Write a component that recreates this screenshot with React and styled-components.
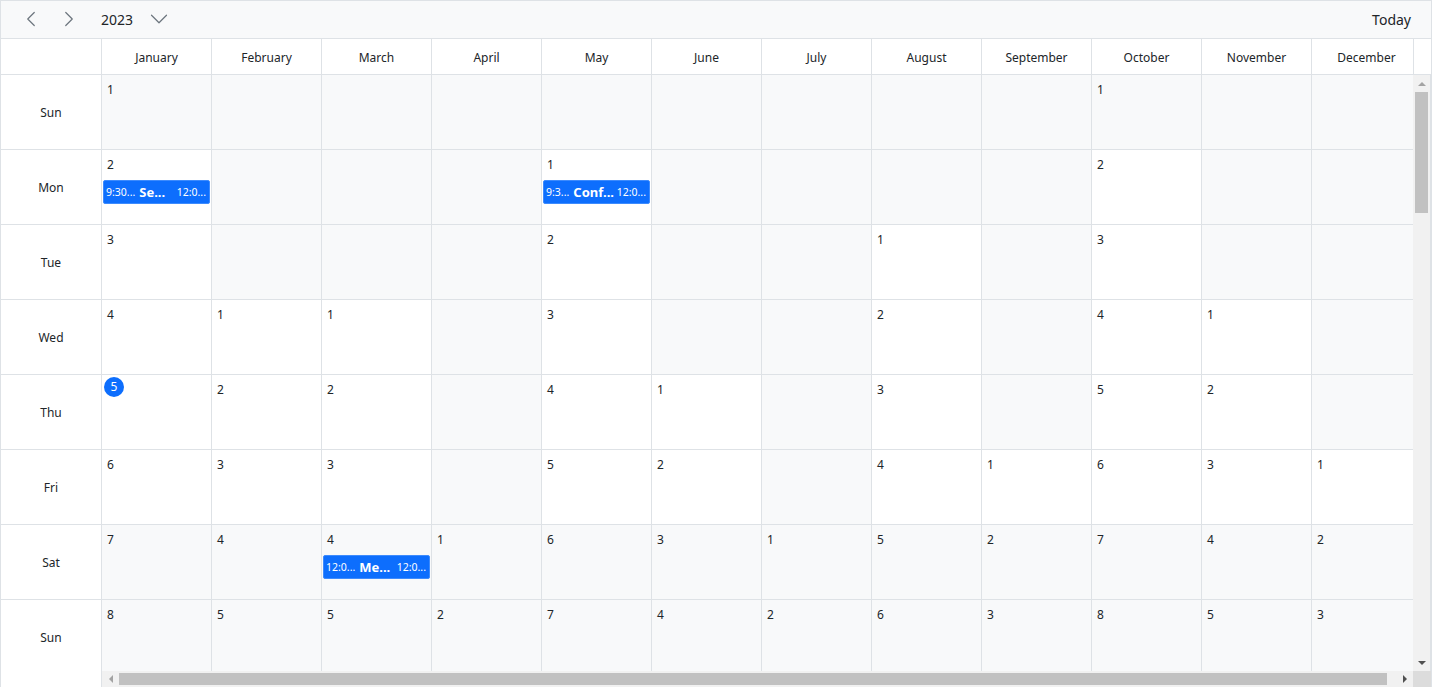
import React from 'react';
import styled, { createGlobalStyle } from 'styled-components';
import { ChevronLeft, ChevronRight, ChevronDown } from 'lucide-react';

const GlobalStyle = createGlobalStyle`
  html, body {
    margin: 0;
    padding: 0;
    background: #fff;
    font-family: "Noto Sans", "Liberation Sans", sans-serif;
    color: #212529;
  }
  * { box-sizing: border-box; }
`;

const months = [
  'January', 'February', 'March', 'April', 'May', 'June',
  'July', 'August', 'September', 'October', 'November', 'December'
];
// weekday of the 1st of each month in 2023 (0 = Sunday)
const firstDays = [0, 3, 3, 6, 1, 4, 6, 2, 5, 0, 3, 5];
const dayNames = ['Sun', 'Mon', 'Tue', 'Wed', 'Thu', 'Fri', 'Sat'];
const ROWS = 8;

const events = {
  '0-1': { start: '9:30...', title: 'Se...', end: '12:0...' },
  '4-1': { start: '9:3...', title: 'Conf...', end: '12:0...' },
  '2-6': { start: '12:0...', title: 'Me...', end: '12:0...' },
};

const App = () => {
  const rows = Array.from({ length: ROWS }, (_, r) => r);

  return (
    <>
      <GlobalStyle />
      <Scheduler>
        <Toolbar>
          <NavButton><ChevronLeft size={26} strokeWidth={1.2} absoluteStrokeWidth /></NavButton>
          <NavButton><ChevronRight size={26} strokeWidth={1.2} absoluteStrokeWidth /></NavButton>
          <YearPicker>
            2023
            <ChevronDown size={30} strokeWidth={1.2} absoluteStrokeWidth />
          </YearPicker>
          <TodayButton>Today</TodayButton>
        </Toolbar>

        <HeaderRow>
          <CornerCell />
          <HeaderViewport>
            {months.map(m => <MonthCell key={m}>{m}</MonthCell>)}
          </HeaderViewport>
          <HeaderSpacer />
        </HeaderRow>

        <Body>
          <DayColumn>
            {rows.map(r => <DayLabel key={r}>{dayNames[r % 7]}</DayLabel>)}
          </DayColumn>

          <Main>
            <ViewportRow>
              <Viewport>
                <Grid>
                  {rows.map(r => months.map((m, mi) => {
                    const date = r - firstDays[mi] + 1;
                    const weekday = r % 7;
                    const empty = date < 1;
                    const muted = empty || weekday === 0 || weekday === 6;
                    const ev = events[`${mi}-${r}`];
                    const today = mi === 0 && date === 5;
                    return (
                      <Cell key={`${r}-${m}`} $muted={muted}>
                        {!empty && <DateLabel $today={today}>{date}</DateLabel>}
                        {ev && (
                          <Event>
                            <EventTime>{ev.start}</EventTime>
                            <EventTitle>{ev.title}</EventTitle>
                            <EventTime $end>{ev.end}</EventTime>
                          </Event>
                        )}
                      </Cell>
                    );
                  }))}
                </Grid>
              </Viewport>
              <VScroll>
                <ScrollArrow><Triangle $dir="up" /></ScrollArrow>
                <VTrack><VThumb /></VTrack>
                <ScrollArrow><Triangle $dir="down" $dark /></ScrollArrow>
              </VScroll>
            </ViewportRow>
            <HScroll>
              <HArrow><Triangle $dir="left" /></HArrow>
              <HThumb />
              <HArrow><Triangle $dir="right" $dark /></HArrow>
              <ScrollCorner />
            </HScroll>
          </Main>
        </Body>
      </Scheduler>
    </>
  );
};

export default App;

const Scheduler = styled.div`
  width: 1432px;
  height: 687px;
  border: 1px solid #dee2e6;
  border-bottom: none;
  display: flex;
  flex-direction: column;
  overflow: hidden;
`

const Toolbar = styled.div`
  height: 38px;
  flex: none;
  display: flex;
  align-items: center;
  padding: 0 20px 1px 11px;
  background: #f8f9fa;
  border-bottom: 1px solid #dee2e6;
`

const NavButton = styled.div`
  width: 38px;
  height: 36px;
  display: flex;
  align-items: center;
  justify-content: center;
  color: #6c757d;
`

const YearPicker = styled.div`
  display: flex;
  align-items: center;
  gap: 11px;
  margin-left: 13px;
  font-size: 14px;
  color: #212529;
  svg { color: #6c757d; }
`

const TodayButton = styled.div`
  margin-left: auto;
  font-size: 14px;
`

const HeaderRow = styled.div`
  height: 36px;
  flex: none;
  display: flex;
  border-bottom: 1px solid #dee2e6;
`

const CornerCell = styled.div`
  width: 101px;
  flex: none;
  border-right: 1px solid #dee2e6;
`

const HeaderViewport = styled.div`
  flex: 1;
  display: flex;
  overflow: hidden;
`

const MonthCell = styled.div`
  width: 110px;
  flex: none;
  display: flex;
  align-items: center;
  justify-content: center;
  padding-top: 2px;
  font-size: 12px;
  border-right: 1px solid #dee2e6;
`

const HeaderSpacer = styled.div`
  width: 18px;
  flex: none;
  border-left: 1px solid #dee2e6;
`

const Body = styled.div`
  flex: 1;
  min-height: 0;
  display: flex;
`

const DayColumn = styled.div`
  width: 101px;
  flex: none;
  overflow: hidden;
  border-right: 1px solid #dee2e6;
`

const DayLabel = styled.div`
  height: 75px;
  display: flex;
  align-items: center;
  justify-content: center;
  font-size: 12px;
  border-bottom: 1px solid #dee2e6;
  &:last-child { border-bottom: none; }
`

const Main = styled.div`
  flex: 1;
  min-width: 0;
  display: flex;
  flex-direction: column;
`

const ViewportRow = styled.div`
  flex: 1;
  min-height: 0;
  display: flex;
`

const Viewport = styled.div`
  flex: 1;
  min-width: 0;
  overflow: hidden;
`

const Grid = styled.div`
  display: grid;
  grid-template-columns: repeat(12, 110px);
  grid-auto-rows: 75px;
`

const Cell = styled.div`
  border-right: 1px solid #dee2e6;
  border-bottom: 1px solid #dee2e6;
  background: ${p => (p.$muted ? '#f8f9fa' : '#fff')};
  overflow: hidden;
`

const DateLabel = styled.div`
  font-size: 12px;
  line-height: 16px;
  height: 22px;
  ${p => p.$today ? `
    width: 20px;
    height: 20px;
    margin: 2px 0 0 2px;
    border-radius: 50%;
    background: #0d6efd;
    color: #fff;
    display: flex;
    align-items: center;
    justify-content: center;
  ` : `
    padding: 7px 0 0 5px;
  `}
`

const Event = styled.div`
  margin: 8px 1px 0;
  height: 24px;
  display: flex;
  align-items: center;
  padding: 0 3px 0 2px;
  background: #0d6efd;
  border: 1px solid #3d8bfd;
  border-radius: 2px;
  color: #fff;
  white-space: nowrap;
  overflow: hidden;
`

const EventTime = styled.span`
  font-size: 10.5px;
  ${p => p.$end && 'margin-left: auto;'}
`

const EventTitle = styled.span`
  font-size: 13px;
  font-weight: 700;
  margin-left: 4px;
`

const VScroll = styled.div`
  width: 18px;
  flex: none;
  display: flex;
  flex-direction: column;
  background: #f1f1f1;
  border-right: 1px solid #dee2e6;
`

const ScrollArrow = styled.div`
  height: 17px;
  flex: none;
  display: flex;
  align-items: center;
  justify-content: center;
`

const VTrack = styled.div`
  flex: 1;
  padding: 0 2px;
`

const VThumb = styled.div`
  height: 121px;
  background: #c1c1c1;
`

const HScroll = styled.div`
  height: 16px;
  flex: none;
  display: flex;
  align-items: stretch;
  background: #f1f1f1;
`

const HArrow = styled.div`
  width: 17px;
  flex: none;
  display: flex;
  align-items: center;
  justify-content: center;
`

const HThumb = styled.div`
  flex: 1;
  margin: 2px 9px 2px 0;
  background: #c1c1c1;
`

const ScrollCorner = styled.div`
  width: 18px;
  flex: none;
  background: #dcdcdc;
`

const Triangle = styled.div`
  width: 0;
  height: 0;
  ${p => {
    const c = p.$dark ? '#505050' : '#a3a3a3';
    switch (p.$dir) {
      case 'up': return `border-left: 4px solid transparent; border-right: 4px solid transparent; border-bottom: 4px solid ${c};`;
      case 'down': return `border-left: 4px solid transparent; border-right: 4px solid transparent; border-top: 4px solid ${c};`;
      case 'left': return `border-top: 4px solid transparent; border-bottom: 4px solid transparent; border-right: 4px solid ${c};`;
      default: return `border-top: 4px solid transparent; border-bottom: 4px solid transparent; border-left: 4px solid ${c};`;
    }
  }}
`
